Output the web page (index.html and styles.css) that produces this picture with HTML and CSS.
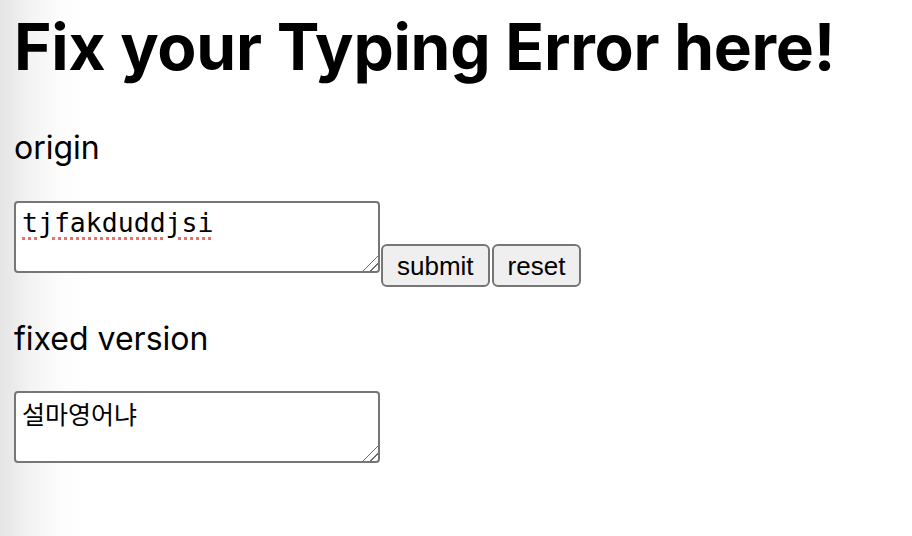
FILE: index.html
```html
<!DOCTYPE html>
<html lang="en">
<head>
<meta charset="utf-8">
<title>Fix your Typing Error here!</title>
<link rel="stylesheet" href="styles.css">
</head>
<body>
<main class="page">
  <h1 class="title">Fix your Typing Error here!</h1>
  <p class="label label-origin">origin</p>
  <div class="input-row">
    <textarea class="box box-origin" spellcheck="false">tjfakduddjsi</textarea>
    <div class="actions">
      <button class="btn" type="button">submit</button>
      <button class="btn" type="button">reset</button>
    </div>
  </div>
  <p class="label label-fixed">fixed version</p>
  <textarea class="box box-fixed" spellcheck="false">설마영어냐</textarea>
</main>
</body>
</html>
```

FILE: styles.css
```css
html, body {
  margin: 0;
  height: 100%;
}

body {
  background: linear-gradient(to right, #e4e4e4 0px, #f3f3f3 30px, #fcfcfc 60px, #ffffff 85px);
  color: #000;
  font-family: Inter, "Noto Sans", sans-serif;
}

.page {
  display: flex;
  flex-direction: column;
  align-items: flex-start;
  padding: 14px 0 0 14px;
}

.title {
  margin: 0;
  font-size: 64px;
  line-height: 66px;
  font-weight: 700;
  letter-spacing: -0.25px;
}

.label {
  margin: 0;
  font-size: 32px;
  line-height: 40px;
  font-weight: 400;
}

.label-origin {
  margin-top: 48px;
}

.label-fixed {
  margin-top: 32px;
}

.input-row {
  display: flex;
  align-items: flex-end;
  margin-top: 33px;
}

.box {
  box-sizing: border-box;
  width: 366px;
  height: 72px;
  margin: 0;
  padding: 4px 6px;
  border: 2px solid #767676;
  border-radius: 4px;
  background: #fff;
  color: #000;
  resize: both;
}

.box::-webkit-scrollbar {
  width: 16px;
  height: 16px;
}

.box::-webkit-resizer {
  background: linear-gradient(135deg,
    transparent 0 47%,
    #6a6a6a 47% 53%,
    transparent 53% 71%,
    #6a6a6a 71% 77%,
    transparent 77%);
}

.box-origin {
  margin-bottom: 14px;
  font-family: "DejaVu Sans Mono", "Liberation Mono", monospace;
  font-size: 26.5px;
  line-height: 32px;
  text-decoration: underline dotted #e8736a;
  text-decoration-thickness: 3px;
  text-underline-offset: 5px;
}

.box-fixed {
  margin-top: 32px;
  font-family: "Noto Sans CJK KR", sans-serif;
  font-size: 25px;
  line-height: 32px;
}

.actions {
  display: flex;
  gap: 2px;
  margin-left: 1px;
}

.btn {
  box-sizing: border-box;
  height: 43px;
  margin: 0;
  padding: 0 14px;
  border: 2px solid #767676;
  border-radius: 6px;
  background: #efefef;
  color: #000;
  font-family: "Liberation Sans", Arial, sans-serif;
  font-size: 26px;
  line-height: 1;
}
```
